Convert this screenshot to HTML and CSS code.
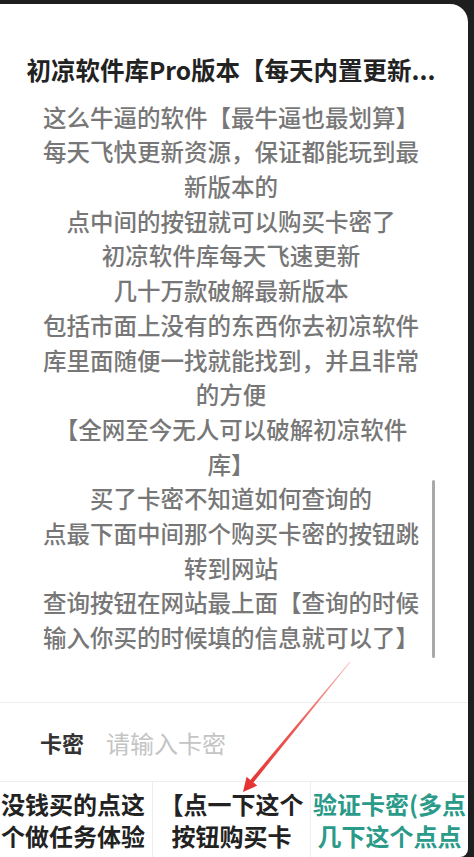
FILE: index.html
```html
<!DOCTYPE html>
<html lang="zh">
<head>
<meta charset="utf-8">
<title>卡密</title>
<link rel="stylesheet" href="styles.css">
</head>
<body>
<div class="card">
  <div class="header">
    <div class="title">初凉软件库Pro版本【每天内置更新...</div>
  </div>
  <div class="scroll">
    <div class="content">
      <p>这么牛逼的软件【最牛逼也最划算】</p>
      <p>每天飞快更新资源，保证都能玩到最新版本的</p>
      <p>点中间的按钮就可以购买卡密了</p>
      <p>初凉软件库每天飞速更新</p>
      <p>几十万款破解最新版本</p>
      <p>包括市面上没有的东西你去初凉软件库里面随便一找就能找到，并且非常的方便</p>
      <p>【全网至今无人可以破解初凉软件库】</p>
      <p>买了卡密不知道如何查询的</p>
      <p>点最下面中间那个购买卡密的按钮跳转到网站</p>
      <p>查询按钮在网站最上面【查询的时候输入你买的时候填的信息就可以了】</p>
    </div>
    <div class="thumb"></div>
  </div>
  <div class="input-row">
    <span class="label">卡密</span>
    <span class="placeholder">请输入卡密</span>
  </div>
  <div class="buttons">
    <div class="btn">没钱买的点这个做任务体验</div>
    <div class="btn">【点一下这个按钮购买卡密】</div>
    <div class="btn primary">验证卡密(多点几下这个点点</div>
  </div>
</div>
<svg class="arrow" width="474" height="857" viewBox="0 0 474 857">
  <defs>
    <linearGradient id="ag" x1="350" y1="662" x2="245" y2="790" gradientUnits="userSpaceOnUse">
      <stop offset="0" stop-color="#e8403a" stop-opacity="0.35"/>
      <stop offset="0.5" stop-color="#e8403a" stop-opacity="0.85"/>
      <stop offset="1" stop-color="#e53030"/>
    </linearGradient>
  </defs>
  <polygon fill="url(#ag)" points="350.3,662.2 253.4,782.4 257.2,785.6 243,792 246.6,776.8 250.4,780.0 349.7,661.8"/>
</svg>
</body>
</html>
```
FILE: styles.css
```css
html, body {
  margin: 0;
  padding: 0;
}
body {
  width: 474px;
  height: 857px;
  overflow: hidden;
  background: #1e1e1e;
  font-family: "Noto Sans CJK SC", "Noto Sans", sans-serif;
  text-spacing-trim: space-all;
  position: relative;
}
.card {
  margin-top: 4px;
  margin-left: -6px;
  width: 474px;
  height: 853px;
  background: #ffffff;
  border-radius: 0 18px 8px 0;
  overflow: hidden;
  display: flex;
  flex-direction: column;
}
.header {
  flex-shrink: 0;
  padding-top: 49px;
  height: 34px;
}
.title {
  font-size: 24.5px;
  line-height: 34px;
  font-weight: 700;
  color: #222;
  text-align: center;
  white-space: nowrap;
}
.scroll {
  flex-shrink: 0;
  position: relative;
  height: 616px;
  padding-top: 12.6px;
  box-sizing: border-box;
  border-bottom: 1px solid #eeeeee;
}
.content {
  width: 386px;
  margin: 0 auto;
  text-align: center;
  color: #777777;
  font-size: 23.5px;
  font-weight: 500;
  line-height: 34.7px;
}
.content p {
  margin: 0;
}
.thumb {
  position: absolute;
  top: 393px;
  right: 33px;
  width: 3px;
  height: 178px;
  border-radius: 2px;
  background: #a9a9a9;
}
.input-row {
  flex-shrink: 0;
  height: 79px;
  display: flex;
  align-items: center;
  padding-left: 46px;
  border-bottom: 1px solid #eeeeee;
  box-sizing: border-box;
}
.label {
  font-size: 22px;
  font-weight: 700;
  color: #333;
  margin-right: 22px;
}
.placeholder {
  font-size: 24px;
  color: #c4c4c4;
}
.buttons {
  flex: 1 1 0;
  min-height: 0;
  overflow: hidden;
  display: grid;
  grid-template-columns: 158px 158px 158px;
  align-items: start;
}
.btn {
  height: 100%;
  padding-top: 6px;
  box-sizing: border-box;
  font-size: 24px;
  line-height: 32px;
  font-weight: 700;
  color: #222222;
  text-align: center;
  border-left: 1px solid #eeeeee;
}
.btn:first-child {
  border-left: none;
}
.btn.primary {
  color: #2a9a89;
}
.arrow {
  position: absolute;
  left: 0;
  top: 0;
  pointer-events: none;
}
```
